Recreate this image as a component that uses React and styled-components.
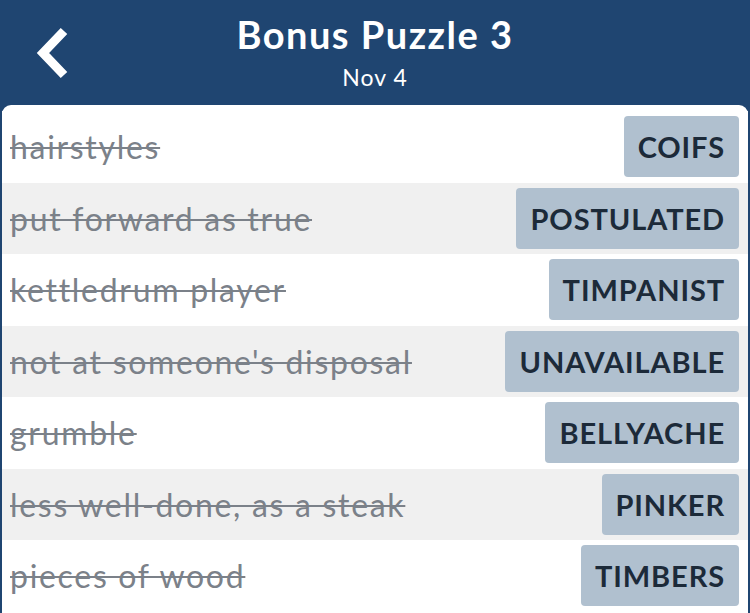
import styled, { createGlobalStyle } from "styled-components"

const Global = createGlobalStyle`
  html, body { margin: 0; padding: 0; background: #1f4571; }
  body { font-family: Lato, "Open Sans", sans-serif; }
`;

const Page = styled.div`
  width: 750px;
  height: 613px;
  overflow: hidden;
  display: flex;
  flex-direction: column;
  background: #1f4571;
`;

const Header = styled.header`
  position: relative;
  height: 105px;
  display: flex;
  flex-direction: column;
  align-items: center;
  color: #fff;
  flex-shrink: 0;
`;

const Back = styled.button`
  position: absolute;
  left: 30px;
  top: 24px;
  width: 44px;
  height: 58px;
  border: 0;
  padding: 0;
  background: none;
  display: block;
`;

const Title = styled.h1`
  margin: 11px 0 0;
  font-family: Lato, sans-serif;
  font-weight: 700;
  font-size: 38px;
  line-height: 46px;
  letter-spacing: 1.5px;
`;

const Sub = styled.div`
  margin-top: 7px;
  font-family: Lato, sans-serif;
  font-size: 23px;
  line-height: 26px;
  letter-spacing: 1px;
`;

const Panel = styled.main`
  flex: 1;
  margin: 0 2px;
  padding-top: 6px;
  background: #fff;
  border-radius: 9px 9px 0 0;
`;

const Row = styled.div`
  height: 71.5px;
  display: flex;
  align-items: center;
  justify-content: space-between;
  padding: 0 9px 0 8px;
  background: ${p => (p.$alt ? "#f0f0f0" : "#fff")};
`;

const Clue = styled.span`
  font-family: Lato, sans-serif;
  font-size: 32px;
  letter-spacing: 1.7px;
  color: #7b8189;
  text-decoration: line-through;
  text-decoration-thickness: 2px;
`;

const Chip = styled.span`
  height: 61px;
  display: flex;
  align-items: center;
  padding: 0 14px;
  background: #b0c0cf;
  border-radius: 4px;
  font-family: Lato, sans-serif;
  font-weight: 700;
  font-size: 29px;
  letter-spacing: 0.9px;
  color: #1c2a39;
`;

const rows = [
  ["hairstyles", "COIFS"],
  ["put forward as true", "POSTULATED"],
  ["kettledrum player", "TIMPANIST"],
  ["not at someone's disposal", "UNAVAILABLE"],
  ["grumble", "BELLYACHE"],
  ["less well-done, as a steak", "PINKER"],
  ["pieces of wood", "TIMBERS"],
];

export default function App() {
  return (
    <Page>
      <Global />
      <Header>
        <Back aria-label="back">
          <svg width="44" height="58" viewBox="0 0 44 58">
            <path d="M34 7 L13 29 L34 51" fill="none" stroke="#fff" strokeWidth="9" strokeLinecap="butt" strokeLinejoin="miter" />
          </svg>
        </Back>
        <Title>Bonus Puzzle 3</Title>
        <Sub>Nov 4</Sub>
      </Header>
      <Panel>
        {rows.map(([clue, answer], i) => (
          <Row key={answer} $alt={i % 2 === 1}>
            <Clue>{clue}</Clue>
            <Chip>{answer}</Chip>
          </Row>
        ))}
      </Panel>
    </Page>
  )
}
